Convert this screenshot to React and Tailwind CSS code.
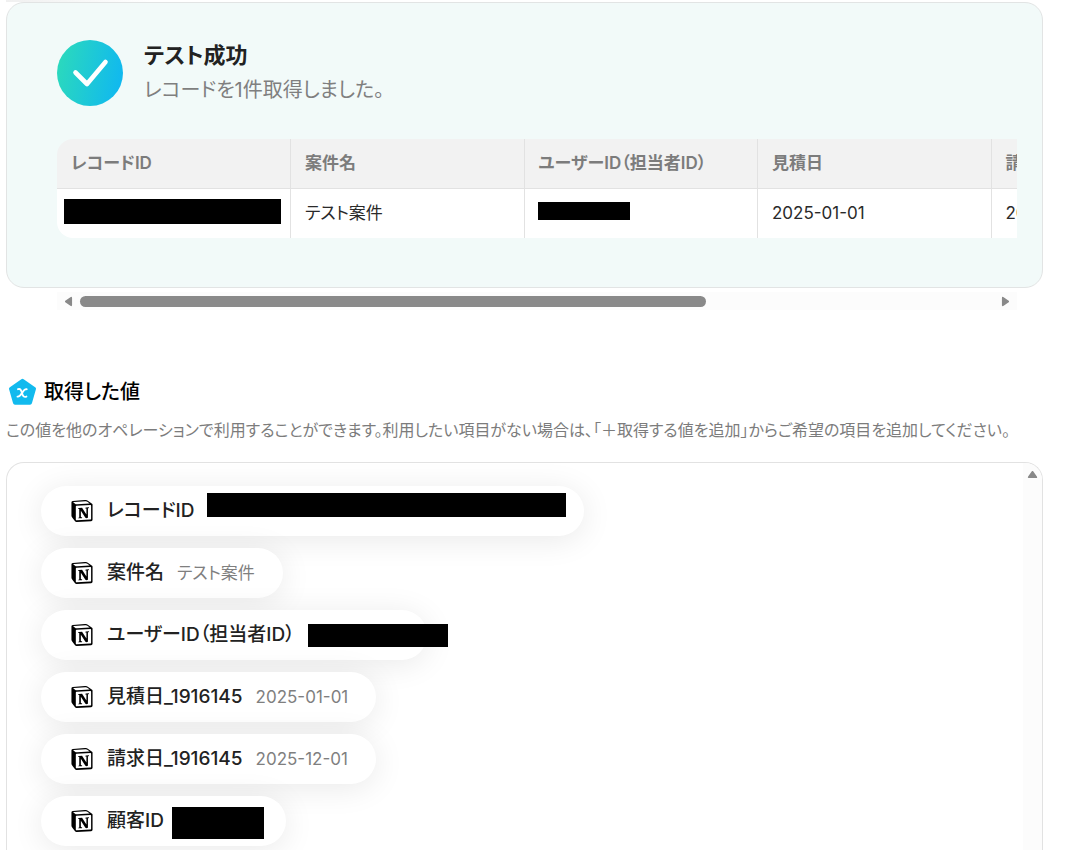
import { SiNotion } from "react-icons/si";

const columns = [
  { label: "レコードID", mask: "-ml-[7px] -mt-1 h-[25px] w-[217px]" },
  { label: "案件名", value: "テスト案件" },
  { label: "ユーザーID（担当者ID）", mask: "-ml-px -mt-1 h-[18px] w-[92px]" },
  { label: "見積日", value: "2025-01-01" },
  { label: "請求日", value: "2025-12-01" },
];

const outputs = [
  { label: "レコードID", mask: "-mt-[13px] -mr-[10px] h-[24px] w-[359px]" },
  { label: "案件名", value: "テスト案件" },
  { label: "ユーザーID（担当者ID）", mask: "-mr-[49px] h-[23px] w-[140px]" },
  { label: "見積日_1916145", value: "2025-01-01" },
  { label: "請求日_1916145", value: "2025-12-01" },
  { label: "顧客ID", mask: "-ml-[5px] -mr-1.5 mt-1 h-[32px] w-[92px]" },
];

function CheckBadge() {
  return (
    <svg viewBox="0 0 66 66" className="size-[66px] shrink-0" aria-hidden="true">
      <defs>
        <linearGradient id="badge" x1="0" y1="0.4" x2="1" y2="0.6">
          <stop offset="0" stopColor="#2bd9bd" />
          <stop offset="1" stopColor="#10b8f0" />
        </linearGradient>
      </defs>
      <circle cx="33" cy="33" r="33" fill="url(#badge)" />
      <path d="M18.5 32.5 30 44 48.5 22" fill="none" stroke="#fff" strokeWidth="4.6" strokeLinecap="round" strokeLinejoin="round" />
    </svg>
  );
}

function ValueIcon() {
  return (
    <svg viewBox="0 0 28 28" className="size-7 shrink-0" aria-hidden="true">
      <path
        d="M14.5 2.8 26 10.8 22 24.8H7L3 10.8Z"
        fill="#12baee"
        stroke="#12baee"
        strokeWidth="4"
        strokeLinejoin="round"
      />
      <path
        d="M10 11.2C12.4 10.4 13 11.6 14 15C15 18.4 16 19.4 18.400 18.600M18.700 11.200C16.800 10.800 15.600 12.400 14 15C12.400 17.600 11.400 19 9.500 18.600"
        fill="none"
        stroke="#fff"
        strokeWidth="1.9"
        strokeLinecap="round"
      />
    </svg>
  );
}

function Arrow({ className }) {
  return (
    <svg viewBox="0 0 10 10" className={className} aria-hidden="true">
      <path d="M5 2.5 8.5 7.5H1.5Z" fill="#898989" stroke="#898989" strokeWidth="1.5" strokeLinejoin="round" />
    </svg>
  );
}

function TestResult() {
  return (
    <section className="rounded-[18px] border border-[#e2e4e4] bg-[#f2faf9] pt-[37px] pr-[25px] pb-[49px] pl-[50px]">
      <div className="flex gap-[21px]">
        <CheckBadge />
        <div>
          <h2 className="text-[22px] leading-[30px] font-bold text-[#222]">テスト成功</h2>
          <p className="mt-1 text-[20px] leading-8 text-[#7f7f7f]">レコードを1件取得しました。</p>
        </div>
      </div>
      <div className="mt-[33px] overflow-hidden rounded-l-2xl">
        <table className="w-[1168px] table-fixed border-collapse text-left">
          <thead>
            <tr className="h-[49px] border-b border-[#e2e2e2] bg-[#f2f2f2]">
              {columns.map((column) => (
                <th key={column.label} className="border-r border-[#e2e2e2] px-3.5 text-[17px] leading-6 font-semibold text-[#7c7c7c]">
                  {column.label}
                </th>
              ))}
            </tr>
          </thead>
          <tbody>
            <tr className="h-[50px] bg-white">
              {columns.map((column) => (
                <td key={column.label} className="border-r border-[#e2e2e2] px-3.5 text-[17px] leading-6 text-[#2a2a2a]">
                  {column.mask ? <span className={`block bg-black ${column.mask}`} /> : column.value}
                </td>
              ))}
            </tr>
          </tbody>
        </table>
      </div>
    </section>
  );
}

function HorizontalScrollbar() {
  return (
    <div className="mt-1 mr-[26px] ml-[51px] flex h-[18px] shrink-0 items-center bg-[#fcfcfc] px-1.5">
      <button type="button" aria-label="左へスクロール" className="shrink-0">
        <Arrow className="size-[11px] -rotate-90" />
      </button>
      <div className="mx-1.5 flex-1">
        <div className="h-[11px] w-[68.5%] rounded-full bg-[#898989]" />
      </div>
      <button type="button" aria-label="右へスクロール" className="shrink-0">
        <Arrow className="size-[11px] rotate-90" />
      </button>
    </div>
  );
}

function OutputPill({ label, value, mask }) {
  return (
    <li className="flex h-[50px] w-fit items-center rounded-full bg-white pr-7 pl-[30px] shadow-[0_4px_32px_rgba(0,0,0,0.09)]">
      <SiNotion className="mr-3.5 size-[22px] shrink-0 text-black" />
      <span className="mr-[13px] text-[19px] leading-7 font-medium whitespace-nowrap text-[#222]">{label}</span>
      {mask ? (
        <span className={`block shrink-0 bg-black ${mask}`} />
      ) : (
        <span className="text-[17px] leading-6 whitespace-nowrap text-[#7f7f7f]">{value}</span>
      )}
    </li>
  );
}

export default function App() {
  return (
    <main className="flex h-screen flex-col overflow-hidden bg-white pr-[29px] pl-1.5 font-['Inter','Noto_Sans_CJK_JP',sans-serif] [font-feature-settings:'palt']" lang="ja">
      <div className="h-0.5 w-36 shrink-0 bg-linear-to-r from-[#f0f0f0] to-white" />
      <TestResult />
      <HorizontalScrollbar />
      <div className="mt-[68px] flex shrink-0 items-center gap-2 pl-0.5">
        <ValueIcon />
        <h2 className="text-[20px] leading-7 font-medium text-black">取得した値</h2>
      </div>
      <p className="mt-3 text-base leading-6 text-[#7c7c7c]">
        この値を他のオペレーションで利用することができます。利用したい項目がない場合は、「＋取得する値を追加」からご希望の項目を追加してください。
      </p>
      <section className="mt-5 flex min-h-0 flex-1 overflow-hidden rounded-t-[18px] border border-b-0 border-[#e2e2e2]">
        <ul className="flex flex-1 flex-col gap-3 pt-[23px] pl-[34px]">
          {outputs.map((output) => (
            <OutputPill key={output.label} {...output} />
          ))}
        </ul>
        <div className="flex w-[19px] items-start justify-center bg-[#fcfcfc] pt-1.5">
          <button type="button" aria-label="上へスクロール">
            <Arrow className="size-[11px]" />
          </button>
        </div>
      </section>
    </main>
  );
}
